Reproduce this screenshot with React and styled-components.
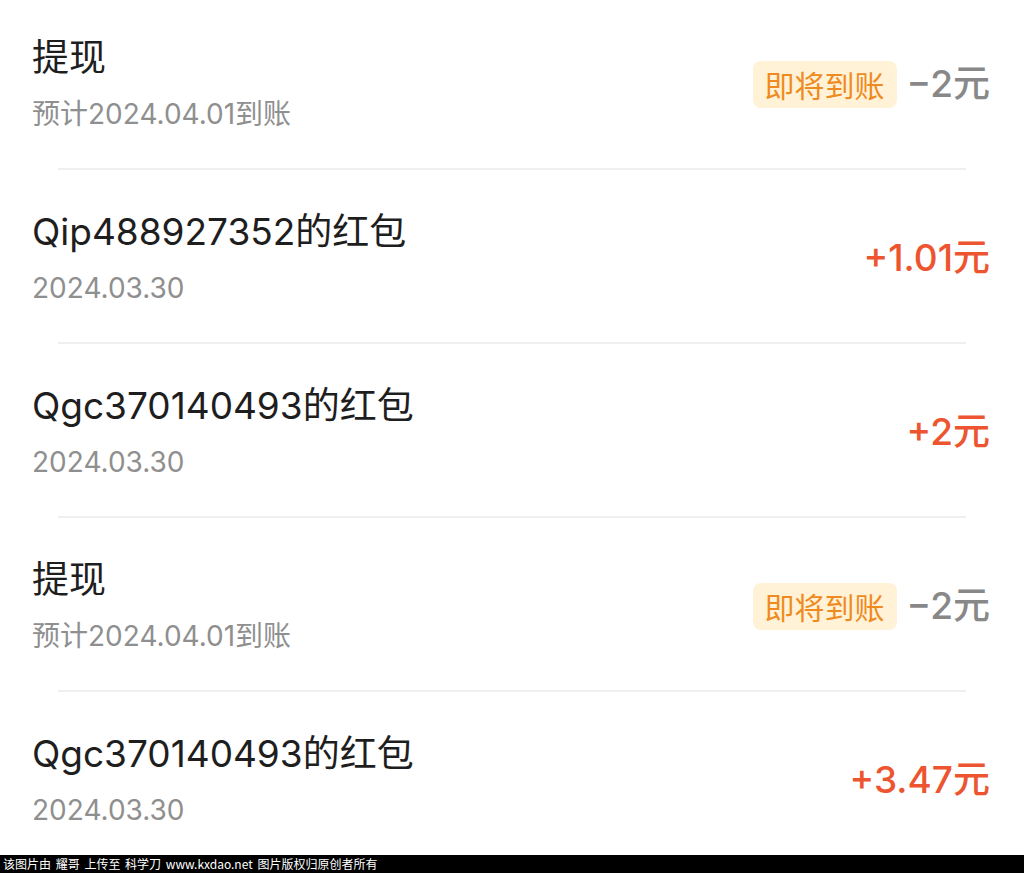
import React from 'react'
import styled, { createGlobalStyle } from 'styled-components'

const GlobalStyle = createGlobalStyle`
  html, body {
    margin: 0;
    padding: 0;
    background: #fff;
  }
  body {
    font-family: Inter, "Noto Sans CJK SC", sans-serif;
  }
`

const records = [
  { title: '提现', sub: '预计2024.04.01到账', amount: '−2元', pending: true },
  { title: 'Qip488927352的红包', sub: '2024.03.30', amount: '+1.01元' },
  { title: 'Qgc370140493的红包', sub: '2024.03.30', amount: '+2元' },
  { title: '提现', sub: '预计2024.04.01到账', amount: '−2元', pending: true },
  { title: 'Qgc370140493的红包', sub: '2024.03.30', amount: '+3.47元' },
]

const App = () => {
  return (
    <Page>
      <GlobalStyle />
      <List>
        {records.map((r, i) => (
          <Row key={i} $first={i === 0} $last={i === records.length - 1}>
            <Info>
              <Title>{r.title}</Title>
              <Sub>{r.sub}</Sub>
            </Info>
            <Right>
              {r.pending && <Badge>即将到账</Badge>}
              <Amount $income={!r.pending}>{r.amount}</Amount>
            </Right>
          </Row>
        ))}
      </List>
      <Footer>该图片由 耀哥 上传至 科学刀 www.kxdao.net 图片版权归原创者所有</Footer>
    </Page>
  )
}

const Page = styled.div`
  width: 1024px;
  height: 873px;
  display: flex;
  flex-direction: column;
  overflow: hidden;
`

const List = styled.div`
  flex: 1;
  min-height: 0;
  overflow: hidden;
  display: flex;
  flex-direction: column;
`

const Row = styled.div`
  position: relative;
  flex-shrink: 0;
  display: flex;
  align-items: center;
  justify-content: space-between;
  padding: ${p => (p.$first ? '36px' : '40px')} 34px 38px 32px;

  &::after {
    content: '';
    display: ${p => (p.$last ? 'none' : 'block')};
    position: absolute;
    left: 58px;
    right: 58px;
    bottom: 0;
    height: 2px;
    background: #efefef;
  }
`

const Info = styled.div`
  display: flex;
  flex-direction: column;
  gap: 16px;
`

const Title = styled.div`
  font-size: 37px;
  line-height: 44px;
  color: #1e1e1e;
`

const Sub = styled.div`
  font-size: 28px;
  line-height: 36px;
  color: #8f8f8f;
`

const Right = styled.div`
  display: flex;
  align-items: center;
  gap: 10px;
`

const Badge = styled.span`
  display: inline-flex;
  align-items: center;
  justify-content: center;
  height: 47px;
  padding: 0 12px;
  border-radius: 8px;
  background: #fff2d7;
  color: #ef8a1e;
  font-size: 30px;
`

const Amount = styled.span`
  font-size: 37px;
  line-height: 44px;
  font-weight: 500;
  color: ${p => (p.$income ? '#ec5530' : '#888')};
`

const Footer = styled.div`
  flex-shrink: 0;
  height: 18px;
  background: #000;
  color: #fff;
  font-family: "Noto Sans CJK SC", sans-serif;
  font-size: 12px;
  line-height: 18px;
  padding-left: 3px;
  word-spacing: 2px;
  white-space: nowrap;
`

export default App
